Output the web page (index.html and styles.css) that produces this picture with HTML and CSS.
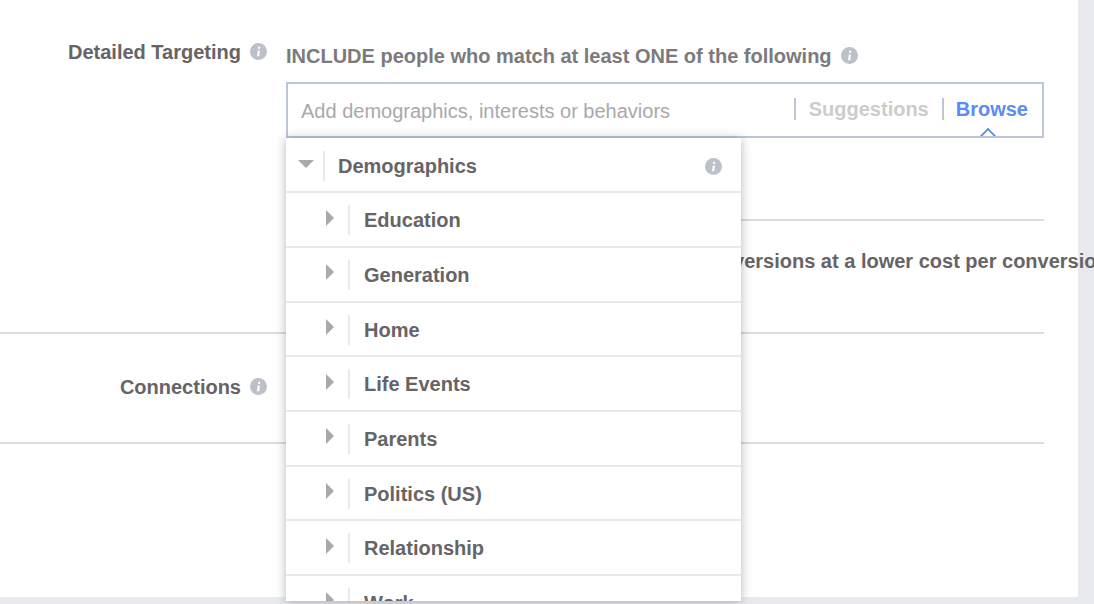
FILE: index.html
```html
<!DOCTYPE html>
<html lang="en">
<head>
<meta charset="utf-8">
<title>Detailed Targeting</title>
<link rel="stylesheet" href="styles.css">
</head>
<body>
<main class="panel">
  <section class="targeting">
    <div class="label-col">
      <span class="label">Detailed Targeting</span>
      <svg class="info" viewBox="0 0 17 17"><circle cx="8.5" cy="8.5" r="8.5"/><path class="info-i" d="M8.2 3.8h2.2l-.3 2H7.9zM7.8 7.4h2.1l-.6 5.8H7z"/></svg>
    </div>
    <div class="content-col">
      <div class="include">
        <span>INCLUDE people who match at least ONE of the following</span>
        <svg class="info" viewBox="0 0 17 17"><circle cx="8.5" cy="8.5" r="8.5"/><path class="info-i" d="M8.2 3.8h2.2l-.3 2H7.9zM7.8 7.4h2.1l-.6 5.8H7z"/></svg>
      </div>
      <div class="search">
        <span class="placeholder">Add demographics, interests or behaviors</span>
        <span class="tab tab-muted">Suggestions</span>
        <span class="tab tab-active">Browse</span>
      </div>
      <div class="expand">
        <p class="expand-text">Expand interests when it may increase conversions at a lower cost per conversion.</p>
      </div>
      <div class="menu">
        <div class="row row-head">
          <span class="caret-down"></span>
          <span class="row-label">Demographics</span>
          <svg class="info" viewBox="0 0 17 17"><circle cx="8.5" cy="8.5" r="8.5"/><path class="info-i" d="M8.2 3.8h2.2l-.3 2H7.9zM7.8 7.4h2.1l-.6 5.8H7z"/></svg>
        </div>
        <div class="row"><span class="caret-right"></span><span class="row-label">Education</span></div>
        <div class="row"><span class="caret-right"></span><span class="row-label">Generation</span></div>
        <div class="row"><span class="caret-right"></span><span class="row-label">Home</span></div>
        <div class="row"><span class="caret-right"></span><span class="row-label">Life Events</span></div>
        <div class="row"><span class="caret-right"></span><span class="row-label">Parents</span></div>
        <div class="row"><span class="caret-right"></span><span class="row-label">Politics (US)</span></div>
        <div class="row"><span class="caret-right"></span><span class="row-label">Relationship</span></div>
        <div class="row"><span class="caret-right"></span><span class="row-label">Work</span></div>
      </div>
    </div>
  </section>
  <section class="connections">
    <div class="label-col">
      <span class="label">Connections</span>
      <svg class="info" viewBox="0 0 17 17"><circle cx="8.5" cy="8.5" r="8.5"/><path class="info-i" d="M8.2 3.8h2.2l-.3 2H7.9zM7.8 7.4h2.1l-.6 5.8H7z"/></svg>
    </div>
  </section>
</main>
</body>
</html>
```
FILE: styles.css
```css
html, body {
  margin: 0;
  height: 100%;
  overflow: hidden;
  background: #e9eaef;
}
body {
  font-family: "Liberation Sans", Arial, sans-serif;
  color: #666466;
}
.panel {
  width: 1078px;
  height: 597px;
  background: #fff;
  box-sizing: border-box;
  padding-right: 34px;
}
.targeting {
  display: flex;
  height: 334px;
  box-sizing: border-box;
  padding-top: 41px;
  border-bottom: 2px solid #dcdddf;
}
.label-col {
  width: 267px;
  flex: none;
  display: flex;
  justify-content: flex-end;
  align-items: flex-start;
  gap: 9px;
}
.label {
  font-size: 20px;
  line-height: 22px;
  font-weight: 700;
}
.info {
  width: 17px;
  height: 17px;
  flex: none;
  fill: #bcc0c9;
  margin-top: 2px;
}
.info-i {
  fill: #fff;
}
.content-col {
  position: relative;
  margin-left: 19px;
  flex: 1;
  min-width: 0;
}
.include {
  display: flex;
  align-items: flex-start;
  gap: 9px;
  margin-top: 4px;
  font-size: 20px;
  line-height: 22px;
  font-weight: 700;
  color: #7b7a7c;
}
.search {
  position: relative;
  box-sizing: border-box;
  height: 56px;
  margin-top: 15px;
  border: 2px solid #bcc6d8;
  display: flex;
  align-items: center;
  padding: 0 14px 0 13px;
  font-size: 20px;
}
.placeholder {
  flex: 1;
  color: #a9a9ab;
  padding-top: 2px;
}
.tab {
  font-weight: 700;
  border-left: 2px solid #bcc6d8;
  padding-left: 12px;
  line-height: 22px;
  margin-top: -2px;
}
.tab-muted {
  color: #cccccc;
  margin-right: 13px;
  padding-left: 13px;
}
.tab-active {
  color: #5b8cf5;
}
.search::after {
  content: "";
  position: absolute;
  right: 48px;
  bottom: -6px;
  width: 12px;
  height: 12px;
  box-sizing: border-box;
  background: #fff;
  border-left: 2px solid #5b8cf5;
  border-top: 2px solid #5b8cf5;
  transform: rotate(45deg);
  clip-path: polygon(0 0, 100% 0, 0 100%);
}
.expand {
  margin-top: 81px;
  border-top: 2px solid #dcdddf;
  padding-top: 29px;
}
.expand-text {
  margin: 0;
  padding-left: 38px;
  font-size: 20px;
  line-height: 22px;
  font-weight: 700;
  white-space: nowrap;
}
.menu {
  position: absolute;
  top: 97px;
  left: 0;
  width: 455px;
  height: 463px;
  overflow: hidden;
  background: #fff;
  box-shadow: 0 1px 10px rgba(40, 45, 60, .35);
}
.row {
  display: flex;
  align-items: center;
  box-sizing: border-box;
  height: 54.7px;
  padding: 1px 0 0 40px;
  border-bottom: 2px solid #e8e9ee;
  font-size: 20px;
  font-weight: 700;
}
.row-head {
  height: 55.3px;
  padding: 3px 19px 0 12px;
}
.row-label {
  flex: 1;
  margin-left: 14px;
  padding-left: 14px;
  border-left: 2px solid #e8e9ee;
  line-height: 30px;
}
.row-head .row-label {
  margin-left: 9px;
  padding-left: 13px;
}
.caret-right {
  width: 0;
  height: 0;
  margin-top: -5px;
  border-left: 8px solid #a9a9ab;
  border-top: 8px solid transparent;
  border-bottom: 8px solid transparent;
}
.caret-down {
  width: 0;
  height: 0;
  margin-top: -4px;
  border-top: 8px solid #a9a9ab;
  border-left: 8px solid transparent;
  border-right: 8px solid transparent;
}
.row-head .info {
  margin-top: 0;
}
.connections {
  height: 110px;
  box-sizing: border-box;
  padding-top: 42px;
  border-bottom: 2px solid #dcdddf;
}
```
